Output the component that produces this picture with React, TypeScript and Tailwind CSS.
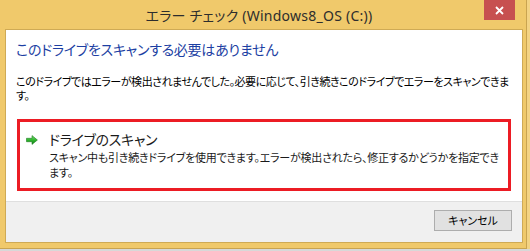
import React from 'react'

const jp = "font-['Noto_Sans','Noto_Sans_CJK_JP',sans-serif] [font-feature-settings:'palt']"

function GreenArrow() {
  return (
    <svg width="12" height="10" viewBox="0 0 12 10" className="shrink-0">
      <defs>
        <linearGradient id="ga" x1="0" y1="0" x2="0" y2="1">
          <stop offset="0" stopColor="#7fe07a" />
          <stop offset="0.5" stopColor="#2fb52c" />
          <stop offset="1" stopColor="#14861a" />
        </linearGradient>
      </defs>
      <path d="M0.5 3.3 H6 V0.6 L11.4 5 L6 9.4 V6.7 H0.5 Z" fill="url(#ga)" stroke="#1b7a20" strokeWidth="0.6" strokeLinejoin="round" />
    </svg>
  )
}

export default function App() {
  return (
    <div className={`w-[530px] h-[251px] overflow-hidden bg-[#e9e4d6] ${jp}`}>
      <div className="flex">
        {/* window */}
        <div className="relative w-[527px] h-[249px] bg-[#f0c96b] border-r border-b border-[#c9a450]">
          {/* title bar */}
          <div className="h-[29px] flex items-center justify-center pr-[8px] pt-[2px]">
            <span className="text-[14px] leading-[20px] tracking-[0.25px] text-[#2d2d2d]">
              エラー チェック (Windows8_OS (C:))
            </span>
          </div>
          <div className="absolute left-[484px] top-0 w-[31px] h-[20px] bg-[#c75050] flex items-center justify-center">
            <svg width="9" height="9" viewBox="0 0 9 9">
              <path d="M1 1 L8 8 M8 1 L1 8" stroke="#fff" strokeWidth="1.8" />
            </svg>
          </div>

          {/* client */}
          <div className="ml-[5px] w-[518px] border border-[#cfaa55] flex flex-col">
            <div className="h-[171px] bg-white pt-[10px]">
              <div className="pl-[10px] text-[14px] leading-[20px] tracking-[-0.25px] text-[#1d3fa3] whitespace-nowrap">
                このドライブをスキャンする必要はありません
              </div>
              <div className="mt-[15px] pl-[10px] text-[11px] leading-[14px] tracking-[-0.45px] text-black whitespace-nowrap">
                <div>このドライブではエラーが検出されませんでした。必要に応じて、引き続きこのドライブでエラーをスキャンできま</div>
                <div>す。</div>
              </div>
              <div className="mt-[16px] ml-[11px] w-[494px] border-[3px] border-[#ec1c24] pt-[8px] pb-[8px] pl-[6px]">
                <div className="flex items-center h-[20px]">
                  <GreenArrow />
                  <span className="ml-[11px] text-[14px] leading-[20px] tracking-[-0.3px] text-[#1a1a1a] whitespace-nowrap">
                    ドライブのスキャン
                  </span>
                </div>
                <div className="pl-[23px] text-[11px] leading-[15px] tracking-[-0.22px] text-[#1a1a1a] whitespace-nowrap">
                  <div>スキャン中も引き続きドライブを使用できます。エラーが検出されたら、修正するかどうかを指定でき</div>
                  <div>ます。</div>
                </div>
              </div>
            </div>
            <div className="h-[41px] bg-[#f0f0f0] border-t border-[#dfdfdf] flex justify-end pt-[8px] pr-[10px]">
              <button
                type="button"
                className="w-[78px] h-[21px] border border-[#adadad] bg-[#e1e1e1] text-[11px] leading-[19px] text-black"
              >
                キャンセル
              </button>
            </div>
          </div>
        </div>
        <div className="w-[3px] h-[249px] bg-[#f3d384]" />
      </div>
      <div className="h-[2px] bg-[#d8d8d8]" />
    </div>
  )
}
